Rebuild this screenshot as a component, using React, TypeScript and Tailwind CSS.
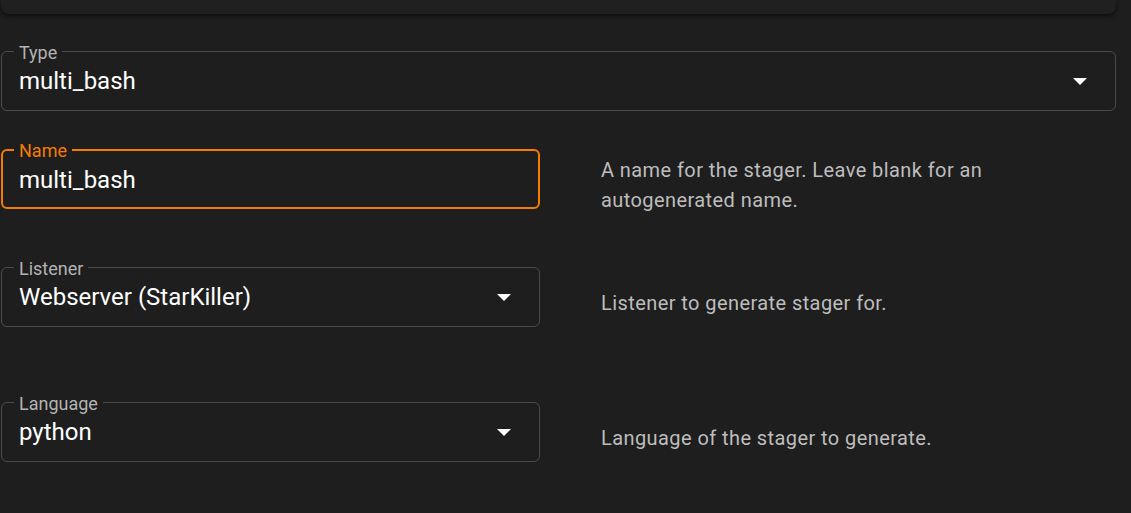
import React from "react";

type FieldProps = {
  label: string;
  value: string;
  focused?: boolean;
  select?: boolean;
};

function Arrow() {
  return (
    <svg width="14" height="7" viewBox="0 0 14 7" className="ml-auto mr-[28px] shrink-0">
      <polygon points="0,0 14,0 7,7" fill="#ffffff" />
    </svg>
  );
}

function Field({ label, value, focused, select }: FieldProps) {
  return (
    <div
      className={
        focused
          ? "relative flex h-[60px] w-full items-center rounded-[6px] border-2 border-[#f57c00]"
          : "relative flex h-[60px] w-full items-center rounded-[6px] border border-[#4b4b4b]"
      }
    >
      <span
        className={
          focused
            ? "absolute left-[11px] top-[0px] -translate-y-1/2 bg-[#1e1e1e] px-[5px] text-[18px] leading-none text-[#f57c00]"
            : "absolute left-[12px] top-[1px] -translate-y-1/2 bg-[#1e1e1e] px-[5px] text-[18px] leading-none text-[#b3b3b3]"
        }
      >
        {label}
      </span>
      <span
        className={
          focused
            ? "pl-[16px] pt-[1px] text-[24px] leading-none text-white"
            : "pl-[17px] text-[24px] leading-none text-white"
        }
      >
        {value}
      </span>
      {select && <Arrow />}
    </div>
  );
}

function Row({
  children,
  helper,
  className,
}: {
  children: React.ReactNode;
  helper: React.ReactNode;
  className: string;
}) {
  return (
    <div className={`flex h-[60px] items-center ${className}`}>
      <div className="w-[539px] shrink-0">{children}</div>
      <div className="ml-[61px] w-[480px] pt-[11px] text-[20px] leading-[30px] tracking-[0.42px] text-[#bdbdbd]">
        {helper}
      </div>
    </div>
  );
}

export default function App() {
  return (
    <div
      className="min-h-[513px] w-[1131px] overflow-hidden bg-[#1e1e1e]"
      style={{ fontFamily: "Roboto, 'Noto Sans', sans-serif" }}
    >
      <div className="ml-px h-[14px] w-[1115px] rounded-b-[8px] bg-[#202020] shadow-[0_2px_4px_rgba(0,0,0,0.55)]" />
      <div className="ml-px flex w-[1115px] flex-col">
        <div className="mt-[37px]">
          <Field label="Type" value="multi_bash" select />
        </div>
        <Row className="mt-[38px]" helper="A name for the stager. Leave blank for an autogenerated name.">
          <Field label="Name" value="multi_bash" focused />
        </Row>
        <Row className="mt-[58px]" helper="Listener to generate stager for.">
          <Field label="Listener" value="Webserver (StarKiller)" select />
        </Row>
        <Row className="mt-[75px]" helper="Language of the stager to generate.">
          <Field label="Language" value="python" select />
        </Row>
      </div>
    </div>
  );
}
